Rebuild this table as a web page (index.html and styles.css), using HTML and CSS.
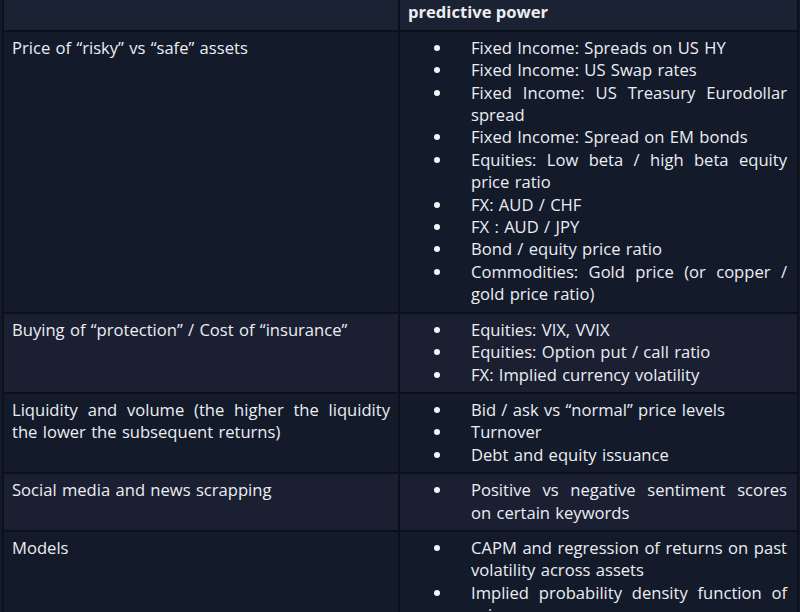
FILE: index.html
```html
<!DOCTYPE html>
<html lang="en">
<head>
<meta charset="utf-8">
<title>Indicators</title>
<link rel="stylesheet" href="styles.css">
</head>
<body>
<table class="grid">
  <colgroup><col class="c1"><col class="c2"></colgroup>
  <thead>
    <tr class="head">
      <th>Signal category / Type of indicator</th>
      <th>Examples of indicators that have shown predictive power</th>
    </tr>
  </thead>
  <tbody>
    <tr class="dark">
      <td class="cat">Price of “risky” vs “safe” assets</td>
      <td class="ex">
        <ul>
          <li>Fixed Income: Spreads on US HY</li>
          <li>Fixed Income: US Swap rates</li>
          <li>Fixed Income: US Treasury Eurodollar spread</li>
          <li>Fixed Income: Spread on EM bonds</li>
          <li>Equities: Low beta / high beta equity price ratio</li>
          <li>FX: AUD / CHF</li>
          <li>FX : AUD / JPY</li>
          <li>Bond / equity price ratio</li>
          <li>Commodities: Gold price (or copper / gold price ratio)</li>
        </ul>
      </td>
    </tr>
    <tr class="light">
      <td class="cat">Buying of “protection” / Cost of “insurance”</td>
      <td class="ex">
        <ul>
          <li>Equities: VIX, VVIX</li>
          <li>Equities: Option put / call ratio</li>
          <li>FX: Implied currency volatility</li>
        </ul>
      </td>
    </tr>
    <tr class="dark">
      <td class="cat">Liquidity and volume (the higher the liquidity the lower the subsequent returns)</td>
      <td class="ex">
        <ul>
          <li>Bid / ask vs “normal” price levels</li>
          <li>Turnover</li>
          <li>Debt and equity issuance</li>
        </ul>
      </td>
    </tr>
    <tr class="light">
      <td class="cat">Social media and news scrapping</td>
      <td class="ex">
        <ul>
          <li>Positive vs negative sentiment scores on certain keywords</li>
        </ul>
      </td>
    </tr>
    <tr class="dark">
      <td class="cat">Models</td>
      <td class="ex">
        <ul>
          <li>CAPM and regression of returns on past volatility across assets</li>
          <li>Implied probability density function of prices</li>
        </ul>
      </td>
    </tr>
  </tbody>
</table>
</body>
</html>
```

FILE: styles.css
```css
html, body {
  margin: 0;
  padding: 0;
  background: #131a2a;
  overflow: hidden;
}

body {
  font-family: "Open Sans", "Noto Sans", sans-serif;
  font-size: 16.6px;
  line-height: 22.4px;
  color: #eceef2;
}

.grid {
  border-collapse: collapse;
  width: 795px;
  margin: -26px 0 0 2px;
  table-layout: fixed;
}

.c1 { width: 396px; }
.c2 { width: 399px; }

.grid th,
.grid td {
  border: 2px solid #0b101b;
  vertical-align: top;
  text-align: justify;
}

.grid td {
  word-spacing: 1px;
}

.grid th {
  font-weight: 700;
  text-align: left;
  padding: 3px 10px 6px 8px;
}

.head { background: #1b2233; }
.dark { background: #131a2a; }
.light { background: #1a2032; }

.cat {
  padding: 5px 8px 6px 8px;
}

.ex {
  padding: 5px 10px 6px 8px;
}

.ex ul {
  list-style: none;
  margin: 0;
  padding: 0;
}

.ex li {
  display: flex;
  text-align: justify;
}

.ex li::before {
  content: "";
  flex: none;
  width: 6px;
  height: 6px;
  border-radius: 50%;
  background: #f4f5f7;
  margin: 8px 31px 0 26px;
}
```
